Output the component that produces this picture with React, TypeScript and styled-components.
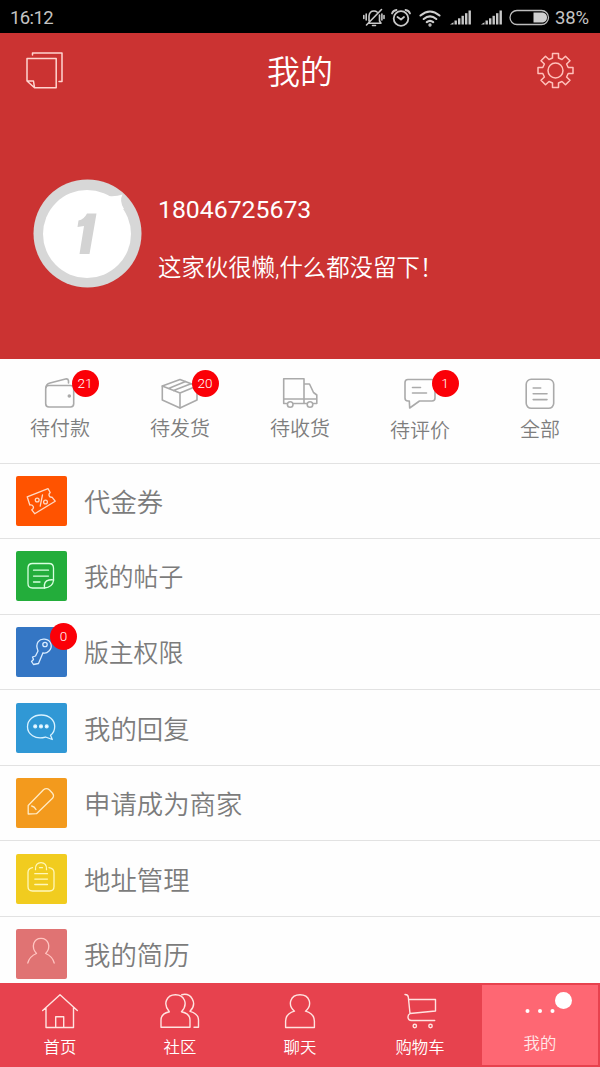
import React from "react";
import styled, { createGlobalStyle } from "styled-components";

const GlobalStyle = createGlobalStyle`
  * { box-sizing: border-box; }
  body {
    margin: 0;
    background: #fff;
    font-family: Roboto, "Noto Sans CJK SC", sans-serif;
    font-weight: 350;
  }
`;

const Screen = styled.div`
  width: 600px;
  height: 1067px;
  display: flex;
  flex-direction: column;
  overflow: hidden;
  background: #fefefe;
`;

const StatusBar = styled.div`
  flex: none;
  height: 33px;
  padding: 2px 11px 0 10px;
  display: flex;
  align-items: center;
  justify-content: space-between;
  background: #000;
  color: #c4c4c4;
  font-size: 18.5px;
  font-weight: 400;
`;

const Clock = styled.span`
  letter-spacing: -0.6px;
`;

const StatusIcons = styled.div`
  display: flex;
  align-items: center;
  svg { display: block; }
`;

const Gap = styled.span<{ $w: number }>`
  width: ${(p) => p.$w}px;
`;

const Percent = styled.span`
  margin-left: 5px;
  letter-spacing: -0.1px;
`;

const Header = styled.header`
  flex: none;
  height: 325.5px;
  background: #cb3332;
  color: #fff;
`;

const TitleBar = styled.div`
  height: 75px;
  padding: 0 26px;
  display: flex;
  align-items: center;
  justify-content: space-between;
  svg { display: block; }
`;

const Title = styled.h1`
  margin: 0;
  padding-top: 5px;
  font-size: 33px;
  font-weight: inherit;
  line-height: 40px;
`;

const Profile = styled.div`
  display: flex;
  align-items: center;
  gap: 16px;
  padding: 70.5px 0 0 33px;
`;

const ProfileText = styled.div`
  display: flex;
  flex-direction: column;
  gap: 28px;
  padding-top: 12px;
`;

const Phone = styled.div`
  font-size: 24.8px;
  font-weight: 400;
  line-height: 30px;
`;

const Signature = styled.div`
  font-size: 23.4px;
  line-height: 30px;
`;

const Orders = styled.nav`
  flex: none;
  height: 105px;
  display: grid;
  grid-template-columns: repeat(5, 1fr);
  border-bottom: 1px solid #e2e2e2;
`;

const Order = styled.div<{ $drop: number }>`
  display: flex;
  flex-direction: column;
  align-items: center;
  padding-top: 16px;
  gap: ${(p) => p.$drop}px;
  color: #7e7e7e;
  font-size: 20px;
  line-height: 26px;
`;

const IconHolder = styled.div`
  position: relative;
  svg { display: block; }
`;

const Badge = styled.span<{ $left: number; $top: number }>`
  position: absolute;
  left: ${(p) => p.$left}px;
  top: ${(p) => p.$top}px;
  width: 27px;
  height: 27px;
  border-radius: 50%;
  background: #fb0007;
  color: #fff;
  font-size: 13.5px;
  line-height: 27px;
  text-align: center;
`;

const Menu = styled.main`
  flex: 1;
  min-height: 0;
  overflow: hidden;
`;

const MenuRow = styled.div<{ $size: number }>`
  height: 75.6px;
  padding: 0 0 0 16px;
  display: flex;
  align-items: center;
  gap: 17px;
  border-bottom: 1px solid #e2e2e2;
  color: #7c7c7c;
  font-size: ${(p) => p.$size}px;
  line-height: 36px;
`;

const RowLabel = styled.span`
  padding-top: 4px;
`;

const Tile = styled.div<{ $color: string }>`
  position: relative;
  width: 51px;
  height: 50px;
  border-radius: 2px;
  background: ${(p) => p.$color};
  svg { display: block; }
`;

const TabBar = styled.footer`
  flex: none;
  height: 84px;
  display: grid;
  grid-template-columns: repeat(5, 1fr);
  background: #e7424e;
`;

const Tab = styled.div<{ $active?: boolean }>`
  display: flex;
  flex-direction: column;
  align-items: center;
  gap: ${(p) => (p.$active ? 2 : 5)}px;
  padding-top: ${(p) => (p.$active ? 7 : 8)}px;
  background: ${(p) => (p.$active ? "#fe6773" : "transparent")};
  border: ${(p) => (p.$active ? "2px solid #e7424e" : "0")};
  color: ${(p) => (p.$active ? "#ffe9ea" : "#fff")};
  font-size: 16.4px;
  line-height: 24px;
`;

const Dot = styled.span`
  position: absolute;
  left: 35px;
  top: 0;
  width: 17px;
  height: 17px;
  border-radius: 50%;
  background: #fff;
`;

type LineProps = { w: number; h: number; color: string; sw?: number; children: React.ReactNode };

const Line = ({ w, h, color, sw = 1.5, children }: LineProps) => (
  <svg width={w} height={h} viewBox={`0 0 ${w} ${h}`} fill="none" stroke={color} strokeWidth={sw} strokeLinecap="round" strokeLinejoin="round">
    {children}
  </svg>
);

const Signal = () => (
  <svg width="22" height="15" viewBox="0 0 22 15" fill="#c8c8c8">
    <path d="M0 14.5L3.5 12.3V14.5Z" />
    <rect x="4.5" y="10.5" width="2.4" height="4" />
    <rect x="8" y="8.3" width="2.4" height="6.2" />
    <rect x="11.5" y="5.8" width="2.4" height="8.7" />
    <rect x="15" y="3.2" width="2.4" height="11.3" />
    <rect x="18.5" y="0.5" width="2.4" height="14" />
  </svg>
);

const grey = "#aaaaaa";

const orders = [
  {
    label: "待付款", gap: 5, badge: "21",
    icon: (
      <>
        <rect x="5.7" y="10.5" width="28" height="21.5" rx="3.2" />
        <path d="M6 12.5C6 9.5 7.5 8.7 10 8L25.500 4Q28 3.500 28.500 5.700V8" />
        <circle cx="29.3" cy="21" r="1" fill="#a08f80" />
      </>
    ),
  },
  {
    label: "待发货", gap: 5, badge: "20",
    icon: (
      <>
        <path d="M20 4.500L37 11V25L20 33L2.300 25V11Z" />
        <path d="M2.300 11L20 18L37 11M20 18V33M8.500 13.500L25.500 6.600M13.500 15.600L31 8.800" />
      </>
    ),
  },
  {
    label: "待收货", gap: 5, badge: "",
    icon: (
      <>
        <path d="M6.500 28.500H3.700V3.700H24V28.500H13.500M3.700 24H24M24 9H29.500L33.500 17.500L36.800 20V28.500H33.500M27 28.500H24M24 24H36.800" />
        <circle cx="10.200" cy="29.500" r="2.800" />
        <circle cx="30" cy="29.500" r="2.800" />
      </>
    ),
  },
  {
    label: "待评价", gap: 7, badge: "1",
    icon: (
      <>
        <path d="M8 4.500H32Q35 4.500 35 7.500V23Q35 26 32 26H19.500L9.700 33L9.300 26H8Q5 26 5 23V7.500Q5 4.500 8 4.500Z" />
        <path d="M12.500 12.500H20.500M12.500 18H26.500" />
      </>
    ),
  },
  {
    label: "全部", gap: 6, badge: "",
    icon: (
      <>
        <rect x="6.200" y="4.300" width="27.500" height="29" rx="5" />
        <path d="M13.200 13H20.700M13.200 18.800H27M13.200 24.600H27" />
      </>
    ),
  },
];

const rows = [
  {
    label: "代金券", color: "#ff5300", size: 26.4, stroke: "#ffd9c4",
    icon: (
      <>
        <path d="M11.200 20.800L32 12.700L34.200 16.500C32 18.500 33 21.600 36 21.200L39.200 25.200L18.700 37.700L15.800 33.800C18.800 31.800 17.300 28.500 13.800 29Z" />
        <path d="M26.500 18.800L24.200 30.200" />
        <circle cx="21.200" cy="24" r="1.900" />
        <circle cx="29.500" cy="26" r="1.900" />
      </>
    ),
  },
  {
    label: "我的帖子", color: "#23ad3b", size: 24.8, stroke: "#d9ffe0",
    icon: (
      <>
        <path d="M28.500 37H16.500Q12 37 12 32.500V17Q12 12.500 16.500 12.500H33Q37.500 12.500 37.500 17V29" />
        <path d="M28.500 37Q27.500 30 33 29Q36.500 28.500 37.700 29Q36.500 36.500 28.500 37ZM17.500 19.200H32.500M17.500 25.100H32.500M17.500 31H24" />
      </>
    ),
  },
  {
    label: "版主权限", color: "#3476c4", size: 24.8, stroke: "#d9ecff", badge: "0",
    icon: (
      <>
        <path d="M22 24C18.500 15.500 24 11.700 28.500 12.200C35.500 13 37 20 33 24C31 26 28.500 26.500 27 25.800L22.500 36.500L17.500 37.500L15.500 34.500L17.500 32.500L16.500 30L19.500 29Z" />
        <circle cx="29" cy="17.500" r="2.200" />
      </>
    ),
  },
  {
    label: "我的回复", color: "#3098d5", size: 26.4, stroke: "#d9f2ff",
    icon: (
      <>
        <path d="M36.300 36.500L29.500 34C19 37 11.500 31 11.500 23.700C11.500 17 17.500 12 25.200 12C33 12 38.700 17 38.700 23.500C38.700 27.500 37 30.500 34.500 32.300Z" />
        <circle cx="19.200" cy="23.400" r="1.400" fill="#fff" />
        <circle cx="25" cy="23.400" r="1.400" fill="#fff" />
        <circle cx="30.700" cy="23.400" r="1.400" fill="#fff" />
      </>
    ),
  },
  {
    label: "申请成为商家", color: "#f39a1d", size: 26.4, stroke: "#ffebc5",
    icon: (
      <>
        <path d="M12.200 36V27.500L27.500 11.800Q30.500 9.500 33.500 12L36.500 15.200Q38.500 17.700 36.500 20.300L20.500 35.700Z" />
        <path d="M15.700 28Q18.500 28.500 20 31.500" />
      </>
    ),
  },
  {
    label: "地址管理", color: "#f1cc1f", size: 26.4, stroke: "#fff7ba",
    icon: (
      <>
        <path d="M16.500 13.700Q12 14.500 12 18.500V32.500Q12 37 16.500 37H33.500Q38 37 38 32.500V18.500Q38 14.500 33 13.700" />
        <path d="M19.500 15.700C19 11 21.500 8.700 25 8.700C28.500 8.700 31 11 30.500 15.700M23.500 13.700H26.500M18.800 19.700H31.500M18.800 25.100H31.500M18.800 30.500H31.500" />
      </>
    ),
  },
  {
    label: "我的简历", color: "#e07373", size: 26.4, stroke: "#ffc4c0",
    icon: (
      <path d="M11.800 34C13 29.500 16 26.300 20.500 24.500C14.700 18 17.500 9.300 25 9.300C32.500 9.300 35.500 18 29.700 24.500C34 26.300 37 29.500 38.200 34" />
    ),
  },
];

const tabs = [
  {
    label: "首页",
    icon: <path d="M2.700 19.500L20 3.700L37.300 19.500M6 17V36.500H33.500V17M15.700 36.500V25.700H23.700V36.500" />,
  },
  {
    label: "社区",
    icon: (
      <>
        <path d="M1 36.300V29C1 24.500 4 22 9.300 20.800C2.500 13 6.500 3.800 15.500 3.800C24.500 3.800 28.500 13 21.500 20.800C27 22 30 24.500 30 29V36.300Z" />
        <path d="M21.800 3.700C31 1.500 38 12 30 20.300C36 22 38.500 25 38.500 29V36.300H34" />
      </>
    ),
  },
  {
    label: "聊天",
    icon: <path d="M5.600 36.500V30C5.600 25 8.500 22 14.500 20.200C7 13.500 10.500 3.800 20 3.800C29.500 3.800 33 13.500 25.500 20.200C31.500 22 34.400 25 34.400 30V36.500Z" />,
  },
  {
    label: "购物车",
    icon: (
      <>
        <path d="M5 3.500Q8 3.500 8.300 6L10 22.500L35.500 20V8.500H9M10 22.500Q7.700 24 8 26.500Q8.300 29.500 11.500 29.500H34.700" />
        <circle cx="14.800" cy="35" r="1.700" />
        <circle cx="30.500" cy="35" r="1.700" />
      </>
    ),
  },
];

const App = () => (
  <>
    <GlobalStyle />
    <Screen>
      <StatusBar>
        <Clock>16:12</Clock>
        <StatusIcons>
          <Line w={22} h={20} color="#c8c8c8" sw={1.6}>
            <path d="M6 13V8Q6.500 3 11 3Q13 3 14 4M16.500 7V13L18 15.200H5.500M9.500 17.500H12.500M3.500 17L18.500 1.500M3.200 6V12M.8 7.500V10.500M18.900 6V12M21 7.500V10.500" />
          </Line>
          <Gap $w={5} />
          <Line w={22} h={20} color="#c8c8c8" sw={1.8}>
            <circle cx="11" cy="10.500" r="7.300" />
            <path d="M7.500 9L11 11.500L14 9M2 5.500Q3 2.500 6.500 2M20 5.500Q19 2.500 15.500 2" />
          </Line>
          <Gap $w={7} />
          <Line w={22} h={20} color="#d0d0d0" sw={2.1}>
            <path d="M1.500 7.500Q11 -.5 20.500 7.500M4.700 11Q11 5.700 17.300 11M7.800 14.200Q11 11.700 14.200 14.200" />
            <circle cx="11" cy="17" r=".6" />
          </Line>
          <Gap $w={9} />
          <Signal />
          <Gap $w={9} />
          <Signal />
          <Gap $w={6} />
          <svg width="41" height="17" viewBox="0 0 41 17">
            <rect x="1" y="1.500" width="38.500" height="14" rx="7" fill="none" stroke="#bdbdbd" strokeWidth="1.300" />
            <path d="M24.500 3.500H34Q38 4.500 38 8.500Q38 12.500 34 13.500H24.500Z" fill="#d0d0d0" />
          </svg>
          <Percent>38%</Percent>
        </StatusIcons>
      </StatusBar>

      <Header>
        <TitleBar>
          <Line w={37} h={37} color="#ffd5d0" sw={1.5}>
            <path d="M1 6.500H30.200V35.700H8.500L1 29ZM1 29H7.500L8.500 35.700M6.500 3V1H36V29.500H33" />
          </Line>
          <Title>我的</Title>
          <Line w={37} h={37} color="#ffc0ba" sw={1.5}>
            <circle cx="18.500" cy="18.500" r="7.500" />
            <path d="M15.500 1.500H21.500V6L25 7.500L28.500 4.200L33 8.700L29.600 12L31.200 15.500H36V21.500H31.200L29.600 25L33 28.300L28.500 32.800L25 29.500L21.500 31V35.500H15.500V31L12 29.500L8.500 32.800L4 28.300L7.400 25L5.800 21.500H1V15.500H5.800L7.400 12L4 8.700L8.500 4.200L12 7.500L15.500 6Z" />
          </Line>
        </TitleBar>
        <Profile>
          <svg width="109" height="109" viewBox="0 0 109 109">
            <circle cx="54.500" cy="54.500" r="54" fill="#d7d7d7" />
            <circle cx="54" cy="55" r="44" fill="#fff" />
            <path d="M74 17Q83 18 89.500 15.500Q86 22 91 30L83 31Z" fill="#fff" />
            <path d="M54 34.500H63.500L56.500 75H46.500L51 47L44.500 48L45.500 41.500Q51 40.500 54 34.500Z" fill="#d3d3d3" />
          </svg>
          <ProfileText>
            <Phone>18046725673</Phone>
            <Signature>这家伙很懒,什么都没留下！</Signature>
          </ProfileText>
        </Profile>
      </Header>

      <Orders>
        {orders.map((o) => (
          <Order key={o.label} $drop={o.gap}>
            <IconHolder>
              <Line w={40} h={36} color={grey} sw={1.6}>{o.icon}</Line>
              {o.badge && <Badge $left={31.500} $top={-5}>{o.badge}</Badge>}
            </IconHolder>
            <span>{o.label}</span>
          </Order>
        ))}
      </Orders>

      <Menu>
        {rows.map((r) => (
          <MenuRow key={r.label} $size={r.size}>
            <Tile $color={r.color}>
              <Line w={51} h={50} color={r.stroke} sw={1.3}>{r.icon}</Line>
              {r.badge && <Badge $left={34} $top={-4}>{r.badge}</Badge>}
            </Tile>
            <RowLabel>{r.label}</RowLabel>
          </MenuRow>
        ))}
      </Menu>

      <TabBar>
        {tabs.map((t) => (
          <Tab key={t.label}>
            <Line w={40} h={40} color="#ffe3e0" sw={1.4}>{t.icon}</Line>
            <span>{t.label}</span>
          </Tab>
        ))}
        <Tab $active>
          <IconHolder>
            <svg width="40" height="38" viewBox="0 0 40 38" fill="#fff">
              <circle cx="7.500" cy="19" r="2" />
              <circle cx="20" cy="19" r="2" />
              <circle cx="32.500" cy="19" r="2" />
            </svg>
            <Dot />
          </IconHolder>
          <span>我的</span>
        </Tab>
      </TabBar>
    </Screen>
  </>
);

export default App;
